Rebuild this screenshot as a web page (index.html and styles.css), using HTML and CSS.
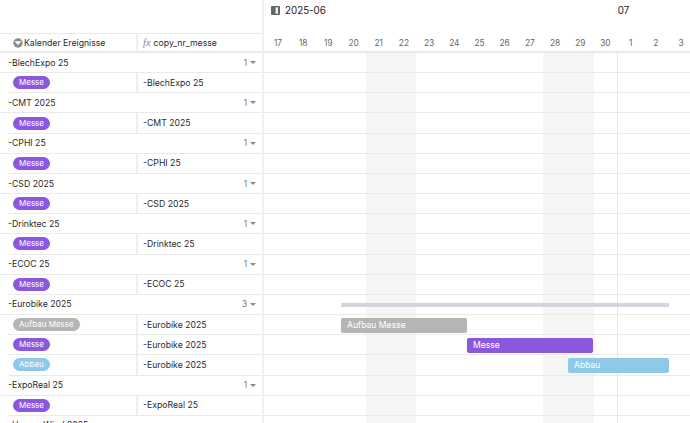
FILE: index.html
```html
<!DOCTYPE html>
<html lang="de">
<head>
<meta charset="utf-8">
<title>Kalender Ereignisse</title>
<link rel="stylesheet" href="styles.css">
</head>
<body>
<div class="app">
  <section class="left">
    <div class="top-spacer"></div>
    <div class="row head">
      <div class="c1 head-c1">
        <svg class="ico-sel" width="10" height="10" viewBox="0 0 10 10"><circle cx="5" cy="5" r="4.7" fill="#8b8b8b"/><path d="M2.2 3.6h5.6L5 6.8z" fill="#fff" stroke="#fff" stroke-width=".6" stroke-linejoin="round"/></svg>
        <span>Kalender Ereignisse</span>
      </div>
      <div class="c2 head-c2"><span class="fx">fx</span><span>copy_nr_messe</span></div>
    </div>
    <div class="row group"><span>-BlechExpo 25</span><span class="cnt">1<i class="tri"></i></span></div>
    <div class="row item"><div class="c1"><span class="pill purple">Messe</span></div><div class="c2">-BlechExpo 25</div></div>
    <div class="row group"><span>-CMT 2025</span><span class="cnt">1<i class="tri"></i></span></div>
    <div class="row item"><div class="c1"><span class="pill purple">Messe</span></div><div class="c2">-CMT 2025</div></div>
    <div class="row group"><span>-CPHI 25</span><span class="cnt">1<i class="tri"></i></span></div>
    <div class="row item"><div class="c1"><span class="pill purple">Messe</span></div><div class="c2">-CPHI 25</div></div>
    <div class="row group"><span>-CSD 2025</span><span class="cnt">1<i class="tri"></i></span></div>
    <div class="row item"><div class="c1"><span class="pill purple">Messe</span></div><div class="c2">-CSD 2025</div></div>
    <div class="row group"><span>-Drinktec 25</span><span class="cnt">1<i class="tri"></i></span></div>
    <div class="row item"><div class="c1"><span class="pill purple">Messe</span></div><div class="c2">-Drinktec 25</div></div>
    <div class="row group"><span>-ECOC 25</span><span class="cnt">1<i class="tri"></i></span></div>
    <div class="row item"><div class="c1"><span class="pill purple">Messe</span></div><div class="c2">-ECOC 25</div></div>
    <div class="row group"><span>-Eurobike 2025</span><span class="cnt">3<i class="tri"></i></span></div>
    <div class="row item"><div class="c1"><span class="pill gray">Aufbau Messe</span></div><div class="c2">-Eurobike 2025</div></div>
    <div class="row item"><div class="c1"><span class="pill purple">Messe</span></div><div class="c2">-Eurobike 2025</div></div>
    <div class="row item"><div class="c1"><span class="pill blue">Abbau</span></div><div class="c2">-Eurobike 2025</div></div>
    <div class="row group"><span>-ExpoReal 25</span><span class="cnt">1<i class="tri"></i></span></div>
    <div class="row item"><div class="c1"><span class="pill purple">Messe</span></div><div class="c2">-ExpoReal 25</div></div>
    <div class="row group"><span>-Husum Wind 2025</span></div>
  </section>
  <section class="right">
    <div class="months">
      <div class="month june">
        <svg class="ico-month" width="9" height="9" viewBox="0 0 9 9"><rect width="9" height="9" rx="1" fill="#666"/><rect x="4.6" y="1.3" width="2.4" height="6.4" fill="#f0f0f0"/></svg>
        <span>2025-06</span>
      </div>
      <div class="month july">07</div>
    </div>
    <div class="days">
      <span>17</span><span>18</span><span>19</span><span>20</span><span>21</span><span>22</span><span>23</span><span>24</span><span>25</span><span>26</span><span>27</span><span>28</span><span>29</span><span>30</span><span>1</span><span>2</span><span>3</span>
    </div>
    <div class="grid">
      <div class="weekend we1"></div>
      <div class="weekend we2"></div>
      <div class="month-line"></div>
      <div class="t-row"></div><div class="t-row"></div>
      <div class="t-row"></div><div class="t-row"></div>
      <div class="t-row"></div><div class="t-row"></div>
      <div class="t-row"></div><div class="t-row"></div>
      <div class="t-row"></div><div class="t-row"></div>
      <div class="t-row"></div><div class="t-row"></div>
      <div class="t-row"><div class="summary"></div></div>
      <div class="t-row"><div class="bar b-gray">Aufbau Messe</div></div>
      <div class="t-row"><div class="bar b-purple">Messe</div></div>
      <div class="t-row"><div class="bar b-blue">Abbau</div></div>
      <div class="t-row"></div><div class="t-row"></div>
      <div class="t-row"></div>
    </div>
  </section>
</div>
</body>
</html>
```
FILE: styles.css
```css
* { box-sizing: border-box; }
html, body { margin: 0; padding: 0; height: 100%; overflow: hidden; background: #fff; }
body { font-family: Inter, "Liberation Sans", sans-serif; font-size: 8.7px; color: #2a2a2a; }
.app { display: flex; width: 690px; height: 423px; overflow: hidden; }

.left { width: 264px; flex: none; border-right: 2px solid #efefef; }
.top-spacer { height: 33px; }
.row { height: 20.17px; display: flex; align-items: center; border-bottom: 1px solid #eaeaea; }
.head { height: 20px; border-top: 1px solid #eaeaea; border-bottom: 2px solid #eaeaea; }
.c1 { width: 138px; height: 100%; flex: none; display: flex; align-items: center; padding-left: 13px; border-right: 2px solid #efefef; }
.c2 { flex: 1; padding-left: 5px; }
.head-c1 { gap: 1px; }
.ico-sel { flex: none; }
.head-c2 { display: flex; align-items: center; gap: 3px; }
.fx { font-family: "Liberation Serif", serif; font-style: italic; color: #8a8a8a; font-size: 10.5px; }
.group { justify-content: space-between; padding: 0 6px 0 8px; }
.item { margin-left: 8px; }
.item .c1 { width: 130px; padding-left: 5px; }
.cnt { display: flex; align-items: center; gap: 3px; color: #777; font-size: 8.3px; }
.tri { width: 0; height: 0; border-left: 3px solid transparent; border-right: 3px solid transparent; border-top: 3.5px solid #8a8a8a; }
.pill { display: inline-block; height: 13px; line-height: 13px; padding: 0 6px; border-radius: 7px; color: #fff; font-size: 8px; }
.purple { background: #8b57dc; }
.gray { background: #b5b5b5; }
.blue { background: #8fc9e8; }

.right { flex: 1; min-width: 0; }
.months { height: 33px; display: flex; align-items: flex-start; padding-top: 5px; font-size: 9.8px; color: #222; }
.month { display: flex; align-items: center; min-height: 11px; }
.june { width: 353.8px; padding-left: 7px; gap: 5px; }
.days { height: 20px; display: flex; padding-left: 1.4px; padding-top: 1px; border-bottom: 2px solid #eaeaea; }
.days span { width: 25.19px; flex: none; text-align: center; line-height: 18px; font-size: 8.3px; color: #666; }
.grid { position: relative; height: 371px; }
.t-row { position: relative; height: 20.17px; border-bottom: 1px solid #eaeaea; }
.weekend { position: absolute; top: 0; bottom: 0; width: 50.4px; background: #f5f5f5; }
.we1 { left: 102px; }
.we2 { left: 279.3px; }
.month-line { position: absolute; top: 0; bottom: 0; left: 353.3px; width: 1px; background: #e6e6e6; }
.summary { position: absolute; left: 76.5px; width: 328px; top: 8px; height: 4px; background: #d2d5db; }
.bar { position: absolute; top: 2.5px; height: 15px; border-radius: 2px; color: #fff; font-size: 8.6px; line-height: 15px; padding-left: 6px; }
.b-gray { left: 77px; width: 126px; background: #b5b5b5; }
.b-purple { left: 203px; width: 126px; background: #8b57dc; }
.b-blue { left: 304px; width: 101px; background: #8fc9e8; }
```
